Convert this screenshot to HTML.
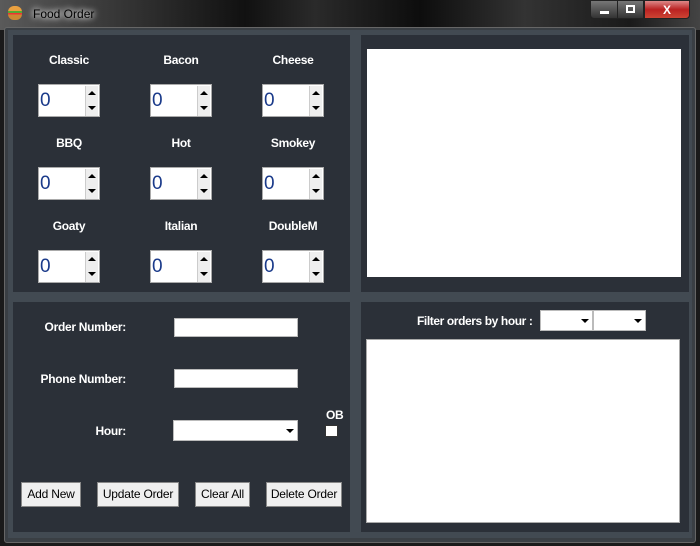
<!DOCTYPE html>
<html><head><style>
*{margin:0;padding:0;box-sizing:border-box}
body{width:700px;height:546px;background:#1a1a1a;font-family:"Liberation Sans",Arial,sans-serif;position:relative;overflow:hidden}
.abs{position:absolute}
.title{left:0;top:0;width:700px;height:30px;background:linear-gradient(90deg,#5a5a5a 0%,#3a3a3a 15%,#111 35%,#2a2a2a 45%,#0d0d0d 60%,#333 75%,#1a1a1a 90%,#444 100%)}
.frame{left:4px;top:27px;width:692px;height:516px;background:#3a3f44;border:1px solid #666;border-radius:3px}
.content{left:8px;top:30px;width:684px;height:508px;background:#424a52}
.panel{background:#2b3038}
.lbl{color:#fff;font-weight:bold;font-size:12px;text-align:center;width:100px;letter-spacing:-0.3px}
.spin{width:62px;height:33px;background:#fff;border:1px solid #aaa}
.spin span{position:absolute;left:1px;top:5px;font-size:19px;color:#1a3a8a}
.spin i{position:absolute;right:1px;width:13px;height:15px;background:#eee;border-left:1px solid #ccc}
.inp{background:#fff;border:1px solid #bbb}
.btn{background:#efefef;border:1px solid #888;font-size:12px;color:#000;text-align:center;line-height:22px;height:25px;letter-spacing:-0.2px}
.tri{width:0;height:0;border-left:4px solid transparent;border-right:4px solid transparent;border-top:4px solid #000}
.trid{width:0;height:0;border-left:4px solid transparent;border-right:4px solid transparent;border-bottom:4px solid #000}
.rl{width:100px;text-align:right;color:#fff;font-weight:bold;font-size:12px;letter-spacing:-0.3px}
</style></head><body>
<div class="abs title"></div>
<div class="abs" style="left:8px;top:6px;width:14px;height:14px;border-radius:6px;background:linear-gradient(#e9a040 0 35%,#5a3 35% 50%,#e33 50% 60%,#c83 60%)"></div>
<div class="abs" style="left:33px;top:7px;color:#000;font-size:12px;text-shadow:0 0 6px #fff,0 0 8px #fff">Food Order</div>
<div class="abs" style="left:590px;top:0;width:28px;height:19px;background:linear-gradient(#777,#333);border:1px solid #222;border-radius:0 0 0 4px"><div class="abs" style="left:9px;top:10px;width:9px;height:3px;background:#fff"></div></div>
<div class="abs" style="left:617px;top:0;width:27px;height:19px;background:linear-gradient(#777,#333);border:1px solid #222"><div class="abs" style="left:8px;top:4px;width:9px;height:8px;border:2px solid #fff"></div></div>
<div class="abs" style="left:644px;top:0;width:46px;height:19px;background:linear-gradient(#d88,#b22 50%,#c43);border:1px solid #222;border-radius:0 0 4px 0;color:#fff;font-weight:bold;font-size:12px;text-align:center;line-height:18px">X</div>
<div class="abs frame"></div>
<div class="abs content"></div>
<div class="abs panel" style="left:13px;top:35px;width:337px;height:257px"></div>
<div class="abs panel" style="left:361px;top:35px;width:328px;height:257px"></div>
<div class="abs panel" style="left:13px;top:302px;width:337px;height:230px"></div>
<div class="abs panel" style="left:361px;top:302px;width:328px;height:230px"></div>
<div class="abs" style="left:367px;top:49px;width:314px;height:228px;background:#fff"></div>
<div class="abs" style="left:366px;top:339px;width:314px;height:184px;background:#fff;border:1px solid #aaa"></div>

<div class="abs lbl" style="left:19px;top:53px">Classic</div>
<div class="abs lbl" style="left:131px;top:53px">Bacon</div>
<div class="abs lbl" style="left:243px;top:53px">Cheese</div>
<div class="abs lbl" style="left:19px;top:136px">BBQ</div>
<div class="abs lbl" style="left:131px;top:136px">Hot</div>
<div class="abs lbl" style="left:243px;top:136px">Smokey</div>
<div class="abs lbl" style="left:19px;top:219px">Goaty</div>
<div class="abs lbl" style="left:131px;top:219px">Italian</div>
<div class="abs lbl" style="left:243px;top:219px">DoubleM</div>

<div class="abs spin" style="left:38px;top:84px"><span>0</span><i style="top:1px"><b class="abs trid" style="left:2px;top:5px"></b></i><i style="top:16px"><b class="abs tri" style="left:2px;top:5px"></b></i></div>
<div class="abs spin" style="left:150px;top:84px"><span>0</span><i style="top:1px"><b class="abs trid" style="left:2px;top:5px"></b></i><i style="top:16px"><b class="abs tri" style="left:2px;top:5px"></b></i></div>
<div class="abs spin" style="left:262px;top:84px"><span>0</span><i style="top:1px"><b class="abs trid" style="left:2px;top:5px"></b></i><i style="top:16px"><b class="abs tri" style="left:2px;top:5px"></b></i></div>
<div class="abs spin" style="left:38px;top:167px"><span>0</span><i style="top:1px"><b class="abs trid" style="left:2px;top:5px"></b></i><i style="top:16px"><b class="abs tri" style="left:2px;top:5px"></b></i></div>
<div class="abs spin" style="left:150px;top:167px"><span>0</span><i style="top:1px"><b class="abs trid" style="left:2px;top:5px"></b></i><i style="top:16px"><b class="abs tri" style="left:2px;top:5px"></b></i></div>
<div class="abs spin" style="left:262px;top:167px"><span>0</span><i style="top:1px"><b class="abs trid" style="left:2px;top:5px"></b></i><i style="top:16px"><b class="abs tri" style="left:2px;top:5px"></b></i></div>
<div class="abs spin" style="left:38px;top:250px"><span>0</span><i style="top:1px"><b class="abs trid" style="left:2px;top:5px"></b></i><i style="top:16px"><b class="abs tri" style="left:2px;top:5px"></b></i></div>
<div class="abs spin" style="left:150px;top:250px"><span>0</span><i style="top:1px"><b class="abs trid" style="left:2px;top:5px"></b></i><i style="top:16px"><b class="abs tri" style="left:2px;top:5px"></b></i></div>
<div class="abs spin" style="left:262px;top:250px"><span>0</span><i style="top:1px"><b class="abs trid" style="left:2px;top:5px"></b></i><i style="top:16px"><b class="abs tri" style="left:2px;top:5px"></b></i></div>

<div class="abs rl" style="left:26px;top:320px">Order Number:</div>
<div class="abs inp" style="left:174px;top:318px;width:124px;height:19px"></div>
<div class="abs rl" style="left:26px;top:372px">Phone Number:</div>
<div class="abs inp" style="left:174px;top:369px;width:124px;height:19px"></div>
<div class="abs rl" style="left:26px;top:424px">Hour:</div>
<div class="abs inp" style="left:173px;top:420px;width:125px;height:21px"><b class="abs tri" style="left:112px;top:8px"></b></div>
<div class="abs" style="left:326px;top:408px;color:#fff;font-size:12px;font-weight:bold;letter-spacing:-0.3px">OB</div>
<div class="abs" style="left:325px;top:425px;width:13px;height:12px;background:#fff;border:1px solid #333"></div>

<div class="abs btn" style="left:21px;top:482px;width:60px">Add New</div>
<div class="abs btn" style="left:97px;top:482px;width:82px">Update Order</div>
<div class="abs btn" style="left:195px;top:482px;width:55px">Clear All</div>
<div class="abs btn" style="left:266px;top:482px;width:76px">Delete Order</div>

<div class="abs" style="left:417px;top:314px;color:#fff;font-weight:bold;font-size:12px;letter-spacing:-0.4px">Filter orders by hour :</div>
<div class="abs inp" style="left:540px;top:310px;width:53px;height:21px"><b class="abs tri" style="left:40px;top:8px"></b></div>
<div class="abs inp" style="left:593px;top:310px;width:53px;height:21px"><b class="abs tri" style="left:40px;top:8px"></b></div>
</body></html>
